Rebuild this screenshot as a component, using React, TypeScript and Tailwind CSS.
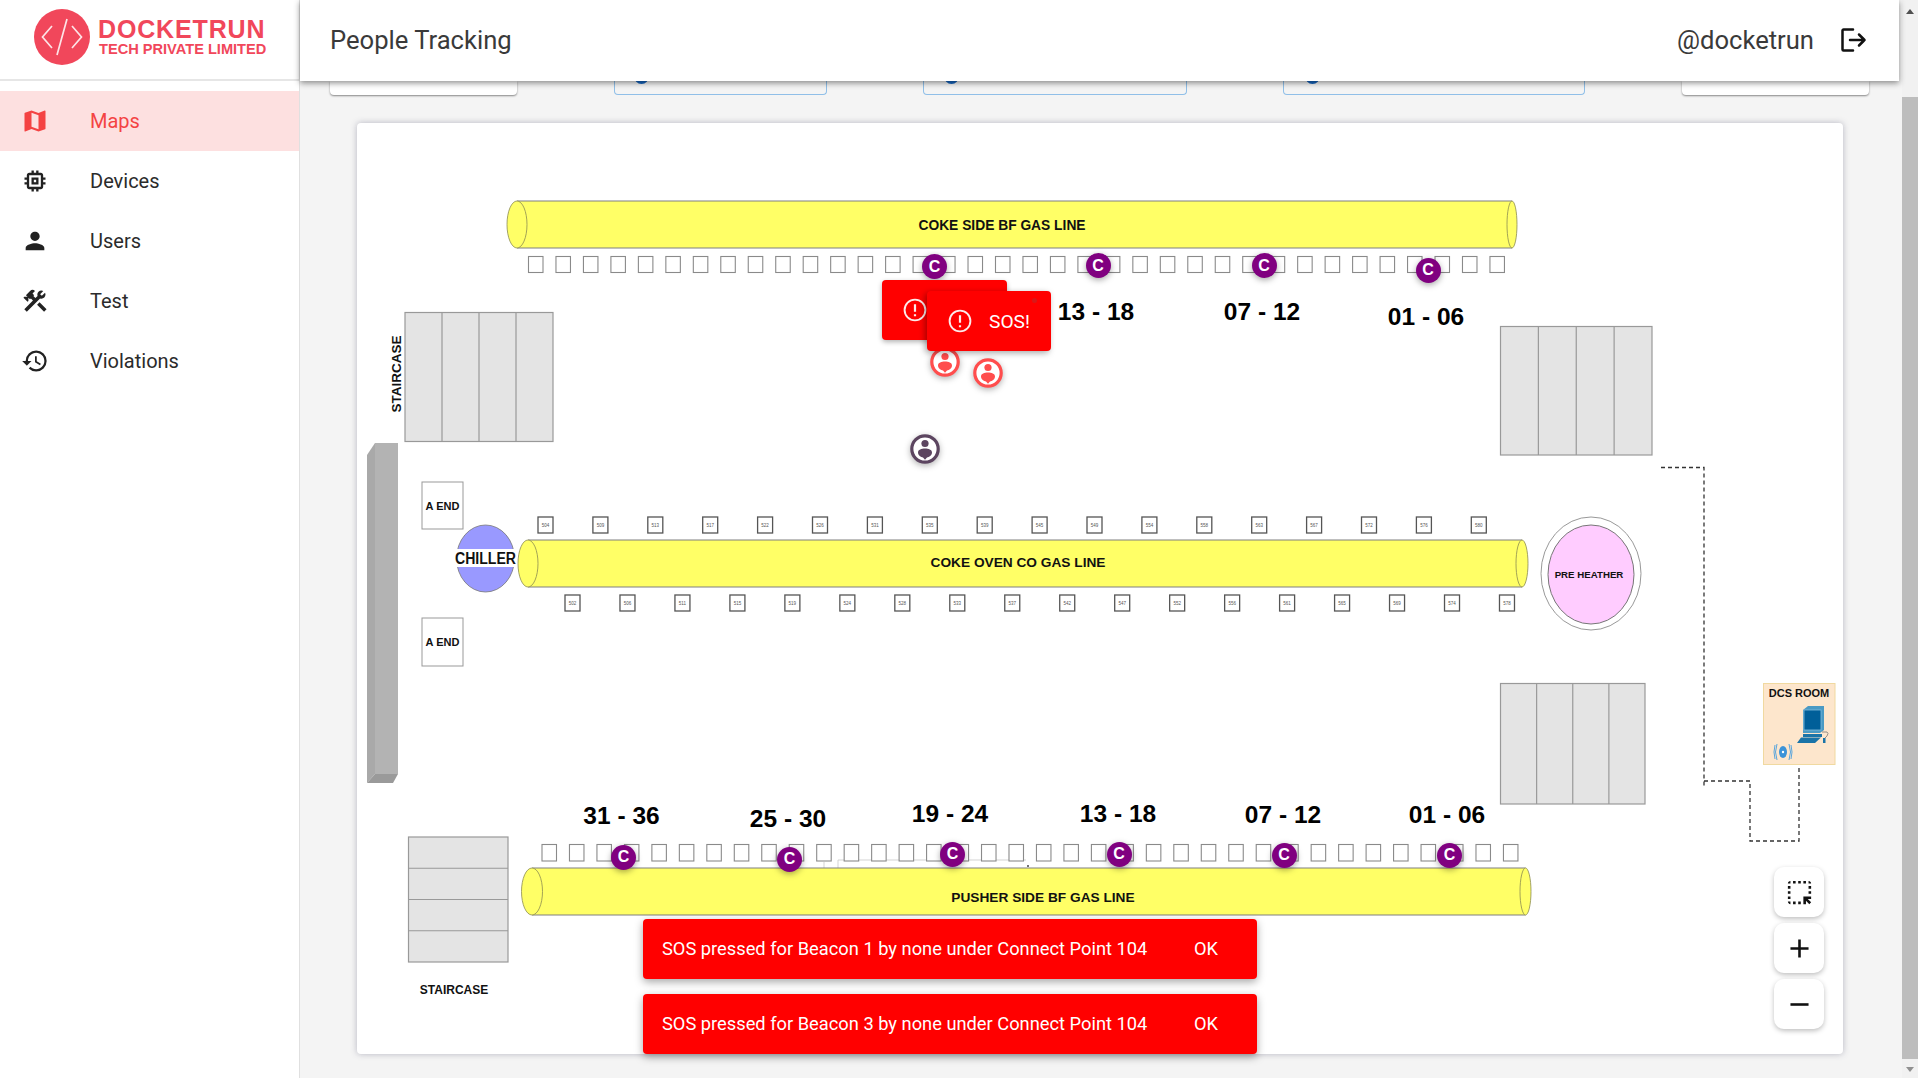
import React from "react";
import { MdMap, MdMemory, MdPerson, MdConstruction, MdHistory, MdHighlightAlt, MdAdd, MdRemove } from "react-icons/md";

const nav = [
  { label: "Maps", Icon: MdMap, active: true },
  { label: "Devices", Icon: MdMemory },
  { label: "Users", Icon: MdPerson },
  { label: "Test", Icon: MdConstruction },
  { label: "Violations", Icon: MdHistory },
];

const range = (n: number) => Array.from({ length: n }, (_, i) => i);
const topTags = ["504","509","513","517","522","526","531","535","539","545","549","554","558","563","567","572","576","580"];
const botTags = ["502","506","511","515","519","524","528","533","537","542","547","552","556","561","565","569","574","578"];
const cMarks = [[934.5,266.5],[1098,265.5],[1264,265.5],[1428,270],[623.5,857],[789.5,859],[952.5,854],[1119,854],[1284,855],[1449.5,855]];
const labels: [string, number, number][] = [
  ["13 - 18",1096,311],["07 - 12",1262,311],["01 - 06",1426,316],
  ["31 - 36",621.5,815.5],["25 - 30",788,818],["19 - 24",950,813],["13 - 18",1118,813],["07 - 12",1283,814],["01 - 06",1447,814],
];
const people = [[945,362,"#ff4d4d"],[988,373,"#ff4d4d"],[925,449,"#5c4560"]] as [number,number,string][];

function Pipe({ x1, x2, y1, y2, lrx, rrx, label, tx, ty, fs }: { x1: number; x2: number; y1: number; y2: number; lrx: number; rrx: number; label: string; tx: number; ty: number; fs: number }) {
  const cy = (y1 + y2) / 2, ry = (y2 - y1) / 2;
  const lc = x1 + lrx, rc = x2 - rrx;
  return (
    <g>
      <rect x={lc} y={y1} width={rc - lc} height={y2 - y1} fill="#ffff66" />
      <path d={`M${lc} ${y1}H${rc}M${lc} ${y2}H${rc}`} stroke="#808080" strokeWidth="1.2" />
      <ellipse cx={lc} cy={cy} rx={lrx} ry={ry} fill="#ffff66" stroke="#8c8c50" strokeWidth="0.8" />
      <ellipse cx={rc} cy={cy} rx={rrx} ry={ry} fill="#ffff66" stroke="#8c8c50" strokeWidth="0.8" />
      <text x={tx} y={ty} textAnchor="middle" dominantBaseline="central" fontSize={fs} fontWeight="700" fill="#111">{label}</text>
    </g>
  );
}

function Stair({ x, y, w, h, n, vertical }: { x: number; y: number; w: number; h: number; n: number; vertical?: boolean }) {
  return (
    <g>
      <rect x={x} y={y} width={w} height={h} fill="#e4e4e4" stroke="#999" strokeWidth="1.2" />
      {range(n - 1).map((i) =>
        vertical ? (
          <line key={i} x1={x} x2={x + w} y1={y + (h / n) * (i + 1)} y2={y + (h / n) * (i + 1)} stroke="#999" strokeWidth="1.2" />
        ) : (
          <line key={i} y1={y} y2={y + h} x1={x + (w / n) * (i + 1)} x2={x + (w / n) * (i + 1)} stroke="#999" strokeWidth="1.2" />
        )
      )}
    </g>
  );
}

function Tag({ cx, y, t }: { cx: number; y: number; t: string }) {
  return (
    <g>
      <rect x={cx - 7.5} y={y} width={15} height={16} fill="#fff" stroke="#555" strokeWidth="1.3" />
      <text x={cx} y={y + 8} textAnchor="middle" dominantBaseline="central" fontSize="4.5" fill="#555">{t}</text>
    </g>
  );
}

function MapDrawing() {
  return (
    <svg viewBox="358 124 1485 930" className="absolute inset-0 w-full h-full font-['Liberation_Sans',Arial,sans-serif]">
      <Pipe x1={507} x2={1517} y1={201} y2={248} lrx={10} rrx={5} label="COKE SIDE BF GAS LINE" tx={1002} ty={225} fs={13.8} />
      {range(36).map((i) => (
        <rect key={i} x={528.5 + i * 27.47} y={256.5} width={14.5} height={16} fill="#fff" stroke="#8a8a8a" strokeWidth="1.1" />
      ))}

      <Stair x={405} y={312.5} w={148} h={129} n={4} />
      <text transform="translate(401 374) rotate(-90)" textAnchor="middle" fontSize="12.5" fontWeight="700" fill="#111" textLength={77} lengthAdjust="spacingAndGlyphs">STAIRCASE</text>
      <Stair x={1500.5} y={326.5} w={151.5} h={128.5} n={4} />
      <Stair x={1500.5} y={683.5} w={144.5} h={120.5} n={4} />
      <Stair x={408.5} y={837} w={99.5} h={125} n={4} vertical />
      <text x={454} y={993.5} textAnchor="middle" fontSize="12" fontWeight="700" fill="#111">STAIRCASE</text>

      <path d="M367 455L375 443V774L367 783Z" fill="#a9a9a9" />
      <path d="M375 443H398V774H375Z" fill="#b3b3b3" />
      <path d="M367 783H393L398 774H375Z" fill="#9a9a9a" />

      <rect x={422} y={482} width={41} height={47} fill="#fff" stroke="#999" />
      <text x={442.5} y={505.5} textAnchor="middle" dominantBaseline="central" fontSize="11" fontWeight="700" fill="#111">A END</text>
      <rect x={422} y={618} width={41} height={48} fill="#fff" stroke="#999" />
      <text x={442.5} y={642} textAnchor="middle" dominantBaseline="central" fontSize="11" fontWeight="700" fill="#111">A END</text>

      <ellipse cx={485.5} cy={558.5} rx={29} ry={33.5} fill="#9999ff" stroke="#777" strokeWidth="0.8" />
      <rect x={455} y={549} width={62} height={18} fill="#fff" />
      <text x={485.5} y={558.5} textAnchor="middle" dominantBaseline="central" fontSize="16" fontWeight="700" fill="#111" textLength={61} lengthAdjust="spacingAndGlyphs">CHILLER</text>

      <Pipe x1={518} x2={1528} y1={540} y2={587} lrx={10} rrx={6} label="COKE OVEN CO GAS LINE" tx={1018} ty={562.5} fs={13.7} />
      {topTags.map((t, i) => <Tag key={t} cx={545.5 + i * 54.9} y={517} t={t} />)}
      {botTags.map((t, i) => <Tag key={t} cx={572.5 + i * 54.97} y={595} t={t} />)}

      <ellipse cx={1591} cy={573.5} rx={50} ry={56.5} fill="#fff" stroke="#999" />
      <ellipse cx={1591} cy={574.5} rx={43} ry={49.5} fill="#ffccff" stroke="#777" />
      <text x={1589} y={574.5} textAnchor="middle" dominantBaseline="central" fontSize="9.7" fontWeight="700" fill="#111">PRE HEATHER</text>

      <path d="M838 868V860H1026M824 868V862" fill="none" stroke="#c8c8c8" strokeWidth="0.8" />
      <path d="M1028 865v2" stroke="#444" strokeWidth="1.5" />
      <Pipe x1={521.5} x2={1531} y1={868} y2={915} lrx={10.5} rrx={5.5} label="PUSHER SIDE BF GAS LINE" tx={1043} ty={897.5} fs={13.7} />
      {range(36).map((i) => (
        <rect key={i} x={542 + i * 27.47} y={844.5} width={14.5} height={16.5} fill="#fff" stroke="#8a8a8a" strokeWidth="1.1" />
      ))}

      {labels.map(([t, x, y], i) => (
        <text key={i} x={x} y={y} textAnchor="middle" dominantBaseline="central" fontSize="24.5" fontWeight="700" fill="#000">{t}</text>
      ))}

      <path d="M1661 467.5H1704V787M1704 781H1750V841H1799V767" fill="none" stroke="#333" strokeWidth="1.3" strokeDasharray="4 3" />

      <rect x={1763.5} y={683.5} width={71.5} height={81} fill="#fde6cc" stroke="#f0d9a0" />
      <text x={1799} y={693} textAnchor="middle" dominantBaseline="central" fontSize="11" fontWeight="700" fill="#111">DCS ROOM</text>
      <g>
        <path d="M1803 710L1808 706H1824V730L1820 733H1803Z" fill="#4a9ac4" />
        <rect x={1804} y={710} width={17} height={20} fill="#005f99" stroke="#7fbbdd" strokeWidth="0.8" />
        <path d="M1803 734H1822V737H1803ZM1801 737.5H1821L1815 743H1797Z" fill="#1a74a8" />
        <path d="M1822 732h5q2 1 0 4l-2 2" fill="none" stroke="#777" strokeWidth="0.8" />
        <rect x={1823} y={738} width={2.5} height={5} fill="#1a74a8" />
      </g>
      <g fill="none" stroke="#5aa5dc" strokeWidth="1">
        <ellipse cx={1783} cy={752} rx={4} ry={6} fill="#3b93d8" stroke="none" />
        <circle cx={1783} cy={752} r={1.2} fill="#fff" stroke="none" />
        <path d="M1777 744q-3 8 0 16M1789 744q3 8 0 16M1775 745q-2 7 0 14M1791 745q2 7 0 14" />
      </g>
    </svg>
  );
}

function PersonPin({ color, x, y }: { color: string; x: number; y: number }) {
  return (
    <svg viewBox="0 0 30 30" className="absolute w-[30px] h-[30px] drop-shadow-[0_2px_3px_rgba(0,0,0,0.3)]" style={{ left: x - 358 - 15, top: y - 124 - 15 }}>
      <circle cx="15" cy="15" r="13.2" fill="#fff" stroke={color} strokeWidth="3.2" />
      <circle cx="15" cy="9.5" r="3.6" fill={color} />
      <path d="M8 18.5c0-3 3.5-4 7-4s7 1 7 4-3 4.6-5 5l-2 2.2-2-2.2c-2-.4-5-2-5-5z" fill={color} />
    </svg>
  );
}

function AlertIcon({ className }: { className: string }) {
  return (
    <svg viewBox="0 0 24 24" className={className} fill="none" stroke="#fdeaea" strokeWidth="1.9">
      <circle cx="12" cy="12" r="10.4" />
      <path d="M12 6.2v7.6M12 16.2v2" strokeWidth="2.2" />
    </svg>
  );
}

function BehindCard({ blue, className, dot }: { blue?: boolean; className: string; dot?: string }) {
  return (
    <div className={`relative h-[14px] rounded-b-[4px] shrink-0 ${blue ? "border border-t-0 border-[#90bfe8] bg-[#f4f4f4]" : "bg-white shadow-[0_1px_2px_rgba(0,0,0,0.45)]"} ${className}`}>
      {dot && <span className={`absolute top-[-6px] w-[15px] h-[9px] rounded-b-full bg-[#1565c0] ${dot}`} />}
    </div>
  );
}

export default function App() {
  return (
    <div className="relative flex w-full h-[1078px] overflow-hidden bg-[#f4f4f4] font-['Roboto',sans-serif]">
      <aside className="w-[300px] shrink-0 bg-white border-r border-[#e0e0e0] flex flex-col">
        <div className="h-[81px] shrink-0 border-b-2 border-[#e6e6e6] flex items-center pl-[34px] gap-[8px]">
          <svg viewBox="0 0 56 56" className="w-[56px] h-[56px] shrink-0 -mt-[6px]">
            <circle cx="28" cy="28" r="28" fill="#f1475b" />
            <path d="M18 17L8.5 28l9.5 11M38 17l9.5 11L38 39M33 10L23 46" fill="none" stroke="#fde3e6" strokeWidth="1.7" />
          </svg>
          <div className="flex flex-col -mt-[6px] font-['Liberation_Sans',Arial,sans-serif] font-bold text-[#f1475b] leading-none">
            <span className="text-[25px] tracking-[0.85px] h-[26px]">DOCKETRUN</span>
            <span className="text-[14.6px] mt-[-1px] ml-[1px]">TECH PRIVATE LIMITED</span>
          </div>
        </div>
        <nav className="pt-[10px] flex flex-col">
          {nav.map(({ label, Icon, active }) => (
            <div key={label} className={`h-[60px] flex items-center pl-[21px] ${active ? "bg-[#fde0e0] text-[#f44343]" : "text-[#2b2b2b]"}`}>
              <Icon className={`w-[28px] h-[28px] ${active ? "text-[#f44343]" : "text-[#222]"}`} />
              <span className="ml-[41px] text-[20px] leading-none">{label}</span>
            </div>
          ))}
        </nav>
      </aside>

      <main className="flex-1 min-w-0 flex flex-col">
        <header className="relative z-10 h-[81px] shrink-0 mr-[3px] bg-white shadow-[0_2px_6px_rgba(0,0,0,0.45)] flex items-center pl-[30px] pr-[32px] text-[#3a3a3a]">
          <span className="text-[25.6px] leading-none">People Tracking</span>
          <span className="ml-auto text-[25.6px] leading-none">@docketrun</span>
          <svg viewBox="0 0 26 24" className="ml-[27px] w-[26px] h-[24px] -mt-[1px]" fill="none" stroke="#111" strokeWidth="2.5" strokeLinecap="round" strokeLinejoin="round">
            <path d="M12 1.5H2.5a1 1 0 0 0-1 1v19a1 1 0 0 0 1 1H12" />
            <path d="M9 12h14.5M18 6.5l5.5 5.5-5.5 5.5" />
          </svg>
        </header>

        <div className="flex pl-[30px]">
          <BehindCard className="w-[187px]" />
          <BehindCard blue className="w-[213px] ml-[97px]" dot="left-[19px]" />
          <BehindCard blue className="w-[264px] ml-[96px]" dot="left-[20px]" />
          <BehindCard blue className="w-[302px] ml-[96px]" dot="left-[21px]" />
          <BehindCard className="w-[187px] ml-[97px]" />
        </div>

        <section className="relative ml-[57px] mt-[28px] w-[1486px] h-[931px] bg-white rounded-[4px] shadow-[0_0_6px_rgba(70,70,100,0.35)]">
          <div className="absolute left-[1px] top-[1px] w-[1485px] h-[930px]">
            <MapDrawing />
            {people.map(([x, y, c]) => <PersonPin key={x} x={x} y={y} color={c} />)}

            {cMarks.map(([x, y]) => (
              <div key={x} className="absolute w-[25px] h-[25px] rounded-full bg-[#800080] text-white flex items-center justify-center text-[16px] font-bold font-['Liberation_Sans',Arial,sans-serif] shadow-[0_2px_6px_rgba(0,0,0,0.35)]" style={{ left: x - 358 - 12.5, top: y - 124 - 12.5 }}>
                C
              </div>
            ))}

            <div className="absolute left-[524px] top-[156px] w-[125px] h-[60px] rounded-[4px] bg-[#ff0000] flex items-center pl-[21px] shadow-[0_2px_5px_rgba(0,0,0,0.3)]">
              <AlertIcon className="w-[24px] h-[24px]" />
            </div>
            <div className="absolute left-[569px] top-[167px] w-[124px] h-[60px] rounded-[4px] bg-[#ff0000] flex items-center pl-[21px] text-white shadow-[-2px_2px_6px_rgba(0,0,0,0.35)]">
              <AlertIcon className="w-[24px] h-[24px]" />
              <span className="ml-[17px] text-[19.2px] leading-none mt-[1px]">SOS!</span>
              <span className="absolute right-[14px] top-[7px] w-[5px] h-[5px] rounded-full bg-[#d81818]" />
            </div>

            <div className="absolute right-[19px] bottom-[25px] flex flex-col gap-[6px]">
              {[MdHighlightAlt, MdAdd, MdRemove].map((I, i) => {
                const Ic = I;
                return (
                  <button key={i} className="w-[50px] h-[50px] rounded-[10px] bg-white flex items-center justify-center shadow-[0_2px_5px_rgba(0,0,0,0.25)] text-[#111]">
                    <Ic className="w-[31px] h-[31px]" />
                  </button>
                );
              })}
            </div>
          </div>
        </section>
      </main>

      <div className="w-[16px] shrink-0 bg-[#f1f1f1] flex flex-col items-center">
        <span className="mt-[9px] w-0 h-0 border-x-[4.5px] border-x-transparent border-b-[5px] border-b-[#505050]" />
        <div className="mt-[83px] w-full h-[962px] bg-[#bdbdbd]" />
        <span className="mt-[8px] w-0 h-0 border-x-[4.5px] border-x-transparent border-t-[5px] border-t-[#909090]" />
      </div>

      <div className="absolute z-20 left-[643px] top-[919px] flex flex-col gap-[15px]">
        {["SOS pressed for Beacon 1 by none under Connect Point 104", "SOS pressed for Beacon 3 by none under Connect Point 104"].map((m) => (
          <div key={m} className="w-[614px] h-[60px] rounded-[4px] bg-[#ff0000] text-white flex items-center pl-[19px] text-[18.3px] leading-none shadow-[0_3px_8px_rgba(0,0,0,0.35)]">
            <span className="w-[532px] whitespace-nowrap">{m}</span>
            <span>OK</span>
          </div>
        ))}
      </div>
    </div>
  );
}
